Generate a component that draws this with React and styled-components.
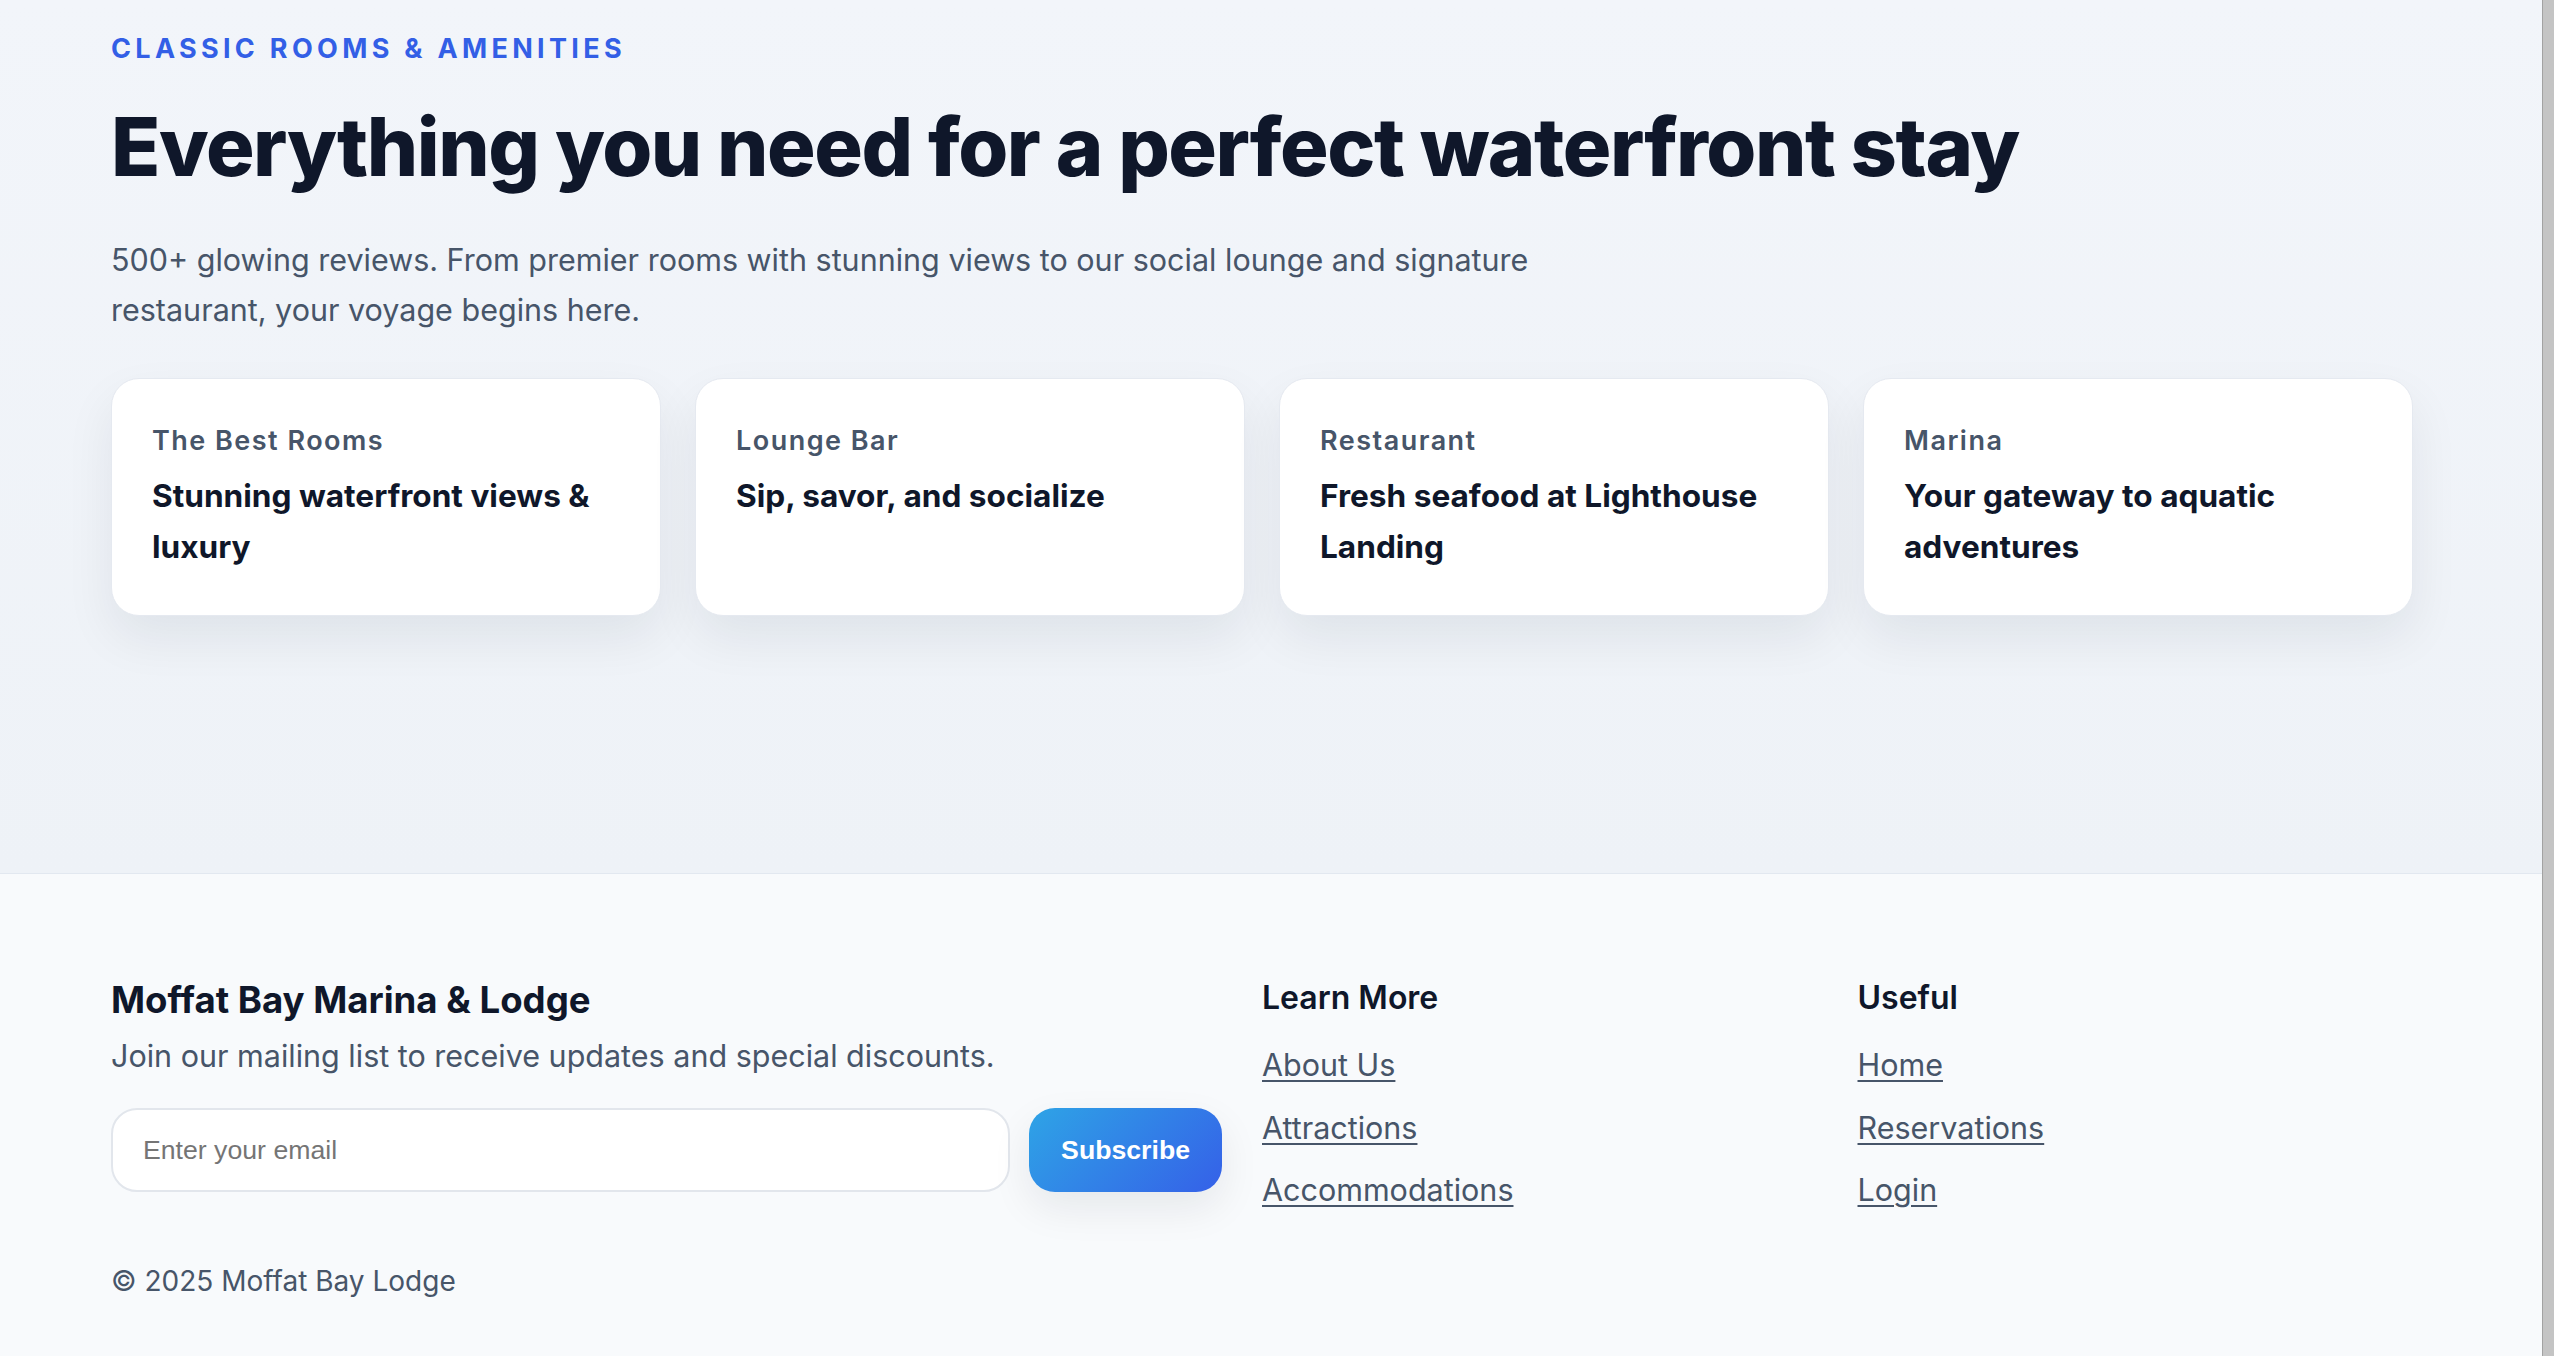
import styled, { createGlobalStyle } from 'styled-components';

const GlobalStyle = createGlobalStyle`
  body {
    margin: 0;
    font-family: Inter, "Noto Sans", sans-serif;
    line-height: 1.6;
    color: #0f172a;
    background: #f8fafc;
  }
`;

const cards = [
  { label: 'The Best Rooms', title: 'Stunning waterfront views & luxury' },
  { label: 'Lounge Bar', title: 'Sip, savor, and socialize' },
  { label: 'Restaurant', title: 'Fresh seafood at Lighthouse Landing' },
  { label: 'Marina', title: 'Your gateway to aquatic adventures' },
];

const learnLinks = ['About Us', 'Attractions', 'Accommodations'];
const usefulLinks = ['Home', 'Reservations', 'Login'];

export default function App() {
  return (
    <Shell>
      <GlobalStyle />
      <Page>
        <Amenities>
          <Container>
            <Eyebrow>Classic Rooms &amp; Amenities</Eyebrow>
            <Heading>Everything you need for a perfect waterfront stay</Heading>
            <Lead>
              500+ glowing reviews. From premier rooms with stunning views to our social lounge and
              signature restaurant, your voyage begins here.
            </Lead>
            <CardGrid>
              {cards.map((c) => (
                <Card key={c.label}>
                  <CardLabel>{c.label}</CardLabel>
                  <CardTitle>{c.title}</CardTitle>
                </Card>
              ))}
            </CardGrid>
          </Container>
        </Amenities>
        <Footer>
          <Container>
            <FooterGrid>
              <Col>
                <Brand>Moffat Bay Marina &amp; Lodge</Brand>
                <Muted>Join our mailing list to receive updates and special discounts.</Muted>
                <SubscribeForm onSubmit={(e) => e.preventDefault()}>
                  <EmailInput type="email" placeholder="Enter your email" />
                  <SubscribeButton type="submit">Subscribe</SubscribeButton>
                </SubscribeForm>
              </Col>
              <Col>
                <ColTitle>Learn More</ColTitle>
                <LinkList>
                  {learnLinks.map((l) => (
                    <li key={l}>
                      <FooterLink href="#">{l}</FooterLink>
                    </li>
                  ))}
                </LinkList>
              </Col>
              <Col>
                <ColTitle>Useful</ColTitle>
                <LinkList>
                  {usefulLinks.map((l) => (
                    <li key={l}>
                      <FooterLink href="#">{l}</FooterLink>
                    </li>
                  ))}
                </LinkList>
              </Col>
            </FooterGrid>
            <Copyright>© 2025 Moffat Bay Lodge</Copyright>
          </Container>
        </Footer>
      </Page>
      <ScrollRail />
    </Shell>
  );
}

// page + the browser's scroll track seen at the right edge
const Shell = styled.div`
  display: flex;
  min-height: 100vh;
`;

const Page = styled.main`
  flex: 1;
  min-width: 0;
  background: #f8fafc;
`;

const ScrollRail = styled.div`
  flex: 0 0 12px;
  background: #c4c4c4;
  border-left: 1px solid #a2a2a2;
  box-sizing: border-box;
`;

const Container = styled.div`
  max-width: 2302px;
  padding: 0 111px;
`;

const Amenities = styled.section`
  background: linear-gradient(180deg, #f2f5fa 0%, #eef2f7 100%);
  padding: 27px 0 257px;
  border-bottom: 1px solid #e2e8f0;
`;

const Eyebrow = styled.div`
  font-size: 27px;
  font-weight: 700;
  letter-spacing: 0.16em;
  text-transform: uppercase;
  color: #335fe6;
`;

const Heading = styled.h2`
  margin: 33px 0 0;
  font-size: 81px;
  line-height: 1.1;
  font-weight: 800;
  letter-spacing: -0.018em;
  color: #0f172a;
`;

const Lead = styled.p`
  margin: 43px 0 0;
  max-width: 1450px;
  font-size: 30.5px;
  line-height: 50px;
  color: #475569;
`;

const CardGrid = styled.div`
  margin-top: 43px;
  display: grid;
  grid-template-columns: repeat(4, 1fr);
  gap: 34px;
`;

const Card = styled.div`
  background: #fff;
  border: 1px solid #e5e9f0;
  border-radius: 28px;
  padding: 40px 40px 43px;
  box-shadow: 0 22px 50px rgba(15, 23, 42, 0.07);
`;

const CardLabel = styled.div`
  font-size: 27px;
  font-weight: 600;
  letter-spacing: 0.055em;
  color: #475569;
`;

const CardTitle = styled.div`
  margin-top: 8px;
  font-size: 31.6px;
  line-height: 51px;
  font-weight: 700;
  color: #0f172a;
`;

const Footer = styled.footer`
  background: #f8fafc;
  padding: 103px 0 80px;
`;

const FooterGrid = styled.div`
  display: grid;
  grid-template-columns: 2fr 1fr 1fr;
  gap: 40px;
`;

const Col = styled.div`
  display: flex;
  flex-direction: column;
`;

const Brand = styled.h3`
  margin: 0;
  font-size: 36.6px;
  line-height: 1.3;
  font-weight: 700;
  color: #0f172a;
`;

const Muted = styled.p`
  margin: 7px 0 0;
  font-size: 30.5px;
  line-height: 48px;
  color: #475569;
`;

const SubscribeForm = styled.form`
  margin-top: 28px;
  display: flex;
  gap: 19px;
`;

const EmailInput = styled.input`
  flex: 1;
  height: 84px;
  box-sizing: border-box;
  padding: 0 30px;
  border: 2px solid #e2e6ec;
  border-radius: 26px;
  background: #fff;
  font-family: "Liberation Sans", Arial, sans-serif;
  font-size: 26.67px;
  color: #0f172a;
  outline: none;
  &::placeholder {
    color: #757575;
  }
`;

const SubscribeButton = styled.button`
  height: 84px;
  padding: 0 32px;
  border: none;
  border-radius: 26px;
  background: linear-gradient(135deg, #2ea4e6 0%, #3560e8 100%);
  color: #fff;
  font-family: "Liberation Sans", Arial, sans-serif;
  font-size: 26.67px;
  font-weight: 700;
  cursor: pointer;
  box-shadow: 0 16px 40px rgba(15, 23, 42, 0.08);
`;

const ColTitle = styled.h4`
  margin: 0;
  font-size: 32px;
  line-height: 1.3;
  font-weight: 600;
  color: #0f172a;
`;

const LinkList = styled.ul`
  list-style: none;
  margin: 22px 0 0;
  padding: 0;
  display: flex;
  flex-direction: column;
  gap: 14.5px;
  font-size: 30.5px;
  line-height: 48px;
`;

const FooterLink = styled.a`
  color: #475569;
  text-decoration: underline;
  text-decoration-thickness: 2px;
  text-underline-offset: 4px;
`;

const Copyright = styled.div`
  margin-top: 45px;
  font-size: 28px;
  color: #475569;
`;
